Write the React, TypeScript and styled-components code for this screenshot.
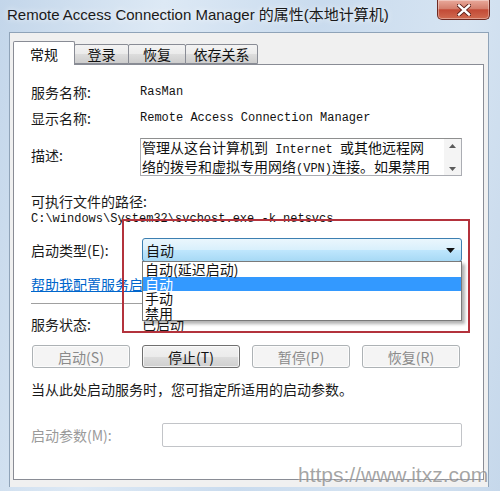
import React from 'react';
import styled, { createGlobalStyle } from 'styled-components';

const GlobalStyle = createGlobalStyle`
  html, body {
    margin: 0;
    padding: 0;
    background: #fff;
  }
  body {
    font-family: "Noto Sans CJK SC", "Liberation Sans", sans-serif;
  }
`;

const Window = styled.div`
  position: relative;
  width: 500px;
  height: 491px;
  overflow: hidden;
  background: linear-gradient(100deg, #c3d6ea 0%, #dde9f5 28%, #c9dbee 55%, #d6e4f2 80%, #c6d8eb 100%);
`;

const TitleBar = styled.div`
  height: 32px;
  display: flex;
  justify-content: space-between;
  align-items: flex-start;
  padding-left: 7px;
  box-sizing: border-box;
`;

const Title = styled.div`
  margin-top: 6px;
  font-family: "Liberation Sans", "Noto Sans CJK SC", sans-serif;
  font-size: 15px;
  line-height: 18px;
  color: #1a1a1a;
  text-shadow: 0 0 6px rgba(255, 255, 255, 0.9);
  white-space: nowrap;
`;

const CloseButton = styled.div`
  width: 53px;
  height: 20px;
  margin-right: 10px;
  box-sizing: border-box;
  border: 1px solid #6e2a22;
  border-top: none;
  border-radius: 0 0 5px 5px;
  background: linear-gradient(180deg, #e9a99b 0%, #d47f6d 45%, #c34a36 52%, #d06a50 100%);
  box-shadow: inset 0 0 0 1px rgba(255, 255, 255, 0.35);
  display: flex;
  align-items: center;
  justify-content: center;
`;

const Client = styled.div`
  margin: 0 11px 0 9px;
  height: 455px;
  box-sizing: border-box;
  background: #f0f0f0;
  border: 1px solid #8fa3b8;
  border-bottom: none;
  padding: 8px 4px 0 3px;
`;

const TabStrip = styled.div`
  display: flex;
  align-items: flex-end;
  height: 23px;
  position: relative;
  z-index: 1;
`;

const Tab = styled.div<{ $w: number; $active?: boolean }>`
  width: ${p => p.$w}px;
  height: ${p => (p.$active ? 24 : 20)}px;
  margin-bottom: ${p => (p.$active ? -1 : 0)}px;
  margin-left: -1px;
  box-sizing: border-box;
  border: 1px solid #898c95;
  border-bottom: ${p => (p.$active ? 'none' : '1px solid #898c95')};
  border-radius: 2px 2px 0 0;
  background: ${p =>
    p.$active
      ? '#ffffff'
      : 'linear-gradient(180deg, #f3f3f3 0%, #ebebeb 50%, #dddddd 51%, #cdcdcd 100%)'};
  display: flex;
  align-items: center;
  justify-content: center;
  font-size: 14px;
  line-height: 18px;
  color: #111;
  position: relative;
  z-index: ${p => (p.$active ? 2 : 1)};

  &:first-child {
    margin-left: 0;
  }
`;

const Panel = styled.div`
  height: 416px;
  box-sizing: border-box;
  border: 1px solid #898c95;
  background: #ffffff;
  padding: 17px 21px 0 17px;
  display: flex;
  flex-direction: column;
`;

const Row = styled.div<{ $mt: number; $h: number; $align?: string }>`
  margin-top: ${p => p.$mt}px;
  height: ${p => p.$h}px;
  display: flex;
  align-items: ${p => p.$align || 'center'};
  flex-shrink: 0;
`;

const Label = styled.div<{ $w?: number; $muted?: boolean; $pt?: number }>`
  width: ${p => (p.$w ? `${p.$w}px` : 'auto')};
  padding-top: ${p => p.$pt || 0}px;
  flex-shrink: 0;
  font-size: 14px;
  line-height: 20px;
  color: ${p => (p.$muted ? '#9a9a9a' : '#1a1a1a')};
  white-space: nowrap;
`;

const MonoText = styled.div`
  font-family: "Liberation Mono", "Noto Sans CJK SC", monospace;
  font-size: 12px;
  line-height: 16px;
  color: #111;
  white-space: nowrap;
`;

const DescBox = styled.div`
  width: 322px;
  height: 38px;
  box-sizing: border-box;
  border: 1px solid #abadb3;
  border-top-color: #8e8f8f;
  display: flex;
  background: #fff;
`;

const DescText = styled.div`
  flex: 1;
  padding: 0 0 0 1px;
  font-family: "Noto Sans CJK SC", sans-serif;
  font-size: 14px;
  line-height: 16px;
  color: #111;
  white-space: pre;
`;

const Latin = styled.span`
  font-family: "Liberation Mono", monospace;
  font-size: 12px;
`;

const ScrollBar = styled.div`
  width: 17px;
  background: #f4f4f4;
  display: flex;
  flex-direction: column;
  justify-content: space-between;
  align-items: center;
  padding: 5px 0 4px;
  box-sizing: border-box;
`;

const Combo = styled.div`
  position: relative;
  width: 320px;
  height: 24px;
  box-sizing: border-box;
  border: 1px solid #3c7fb1;
  border-radius: 3px;
  background: linear-gradient(180deg, #eaf6fd 0%, #d9f0fc 48%, #bee6fd 52%, #a7d9f5 100%);
  display: flex;
  align-items: center;
  justify-content: space-between;
  padding: 0 6px 0 3px;
  font-size: 14px;
  color: #111;
`;

const DropList = styled.div`
  position: absolute;
  top: 100%;
  left: -1px;
  width: 320px;
  height: 60px;
  box-sizing: border-box;
  border: 1px solid #7a7a7a;
  background: #fff;
  box-shadow: 3px 3px 3px rgba(0, 0, 0, 0.3);
  z-index: 5;
`;

const DropItem = styled.div<{ $selected?: boolean }>`
  height: 14.5px;
  line-height: 14.5px;
  padding-left: 2px;
  font-size: 14px;
  color: ${p => (p.$selected ? '#ffffff' : '#111')};
  background: ${p => (p.$selected ? '#3399ff' : 'transparent')};
  white-space: nowrap;
`;

const Highlight = styled.div`
  position: absolute;
  left: -21px;
  top: -20px;
  width: 348px;
  height: 114px;
  box-sizing: border-box;
  border: 2px solid #b3323c;
  z-index: 6;
  pointer-events: none;
`;

const Link = styled.div`
  font-size: 14px;
  line-height: 18px;
  color: #0066cc;
  text-decoration: underline;
  white-space: nowrap;
`;

const Separator = styled.div`
  margin-top: 10px;
  height: 1px;
  background: #a0a0a0;
  flex-shrink: 0;
`;

const ButtonRow = styled.div`
  margin-top: 11px;
  margin-left: 1px;
  display: flex;
  gap: 12px;
  flex-shrink: 0;
`;

const Button = styled.div<{ $disabled?: boolean }>`
  width: 98px;
  height: 23px;
  box-sizing: border-box;
  border: 1px solid ${p => (p.$disabled ? '#adb2b5' : '#707070')};
  border-radius: 3px;
  background: ${p =>
    p.$disabled
      ? '#f4f4f4'
      : 'linear-gradient(180deg, #f2f2f2 0%, #ebebeb 50%, #dddddd 51%, #cfcfcf 100%)'};
  box-shadow: inset 0 0 0 1px rgba(255, 255, 255, 0.7);
  display: flex;
  align-items: center;
  justify-content: center;
  font-size: 14px;
  color: ${p => (p.$disabled ? '#8a8a8a' : '#111')};
`;

const Input = styled.div`
  width: 300px;
  height: 24px;
  box-sizing: border-box;
  border: 1px solid #c2c4c8;
  border-radius: 2px;
  background: #fff;
`;

const Watermark = styled.div`
  position: absolute;
  left: 298px;
  top: 463px;
  font-family: "Liberation Sans", Arial, sans-serif;
  font-size: 21px;
  line-height: 24px;
  color: rgba(105, 105, 105, 0.6);
  text-shadow: 0 0 2px rgba(255, 255, 255, 0.8);
  white-space: nowrap;
  pointer-events: none;
`;

const CloseIcon = () => (
  <svg width="14" height="12" viewBox="0 0 14 12">
    <path d="M2 1.5 L12 10.5 M12 1.5 L2 10.5" stroke="#5a1e18" strokeWidth="4.2" strokeLinecap="square" />
    <path d="M2 1.5 L12 10.5 M12 1.5 L2 10.5" stroke="#ffffff" strokeWidth="2.4" strokeLinecap="square" />
  </svg>
);

const Arrow = ({ up, size = 7, color = '#5a5a5a' }: { up?: boolean; size?: number; color?: string }) => (
  <svg width={size} height={Math.round(size * 0.57)} viewBox="0 0 7 4">
    <path d={up ? 'M0 4 L3.5 0 L7 4 Z' : 'M0 0 L7 0 L3.5 4 Z'} fill={color} />
  </svg>
);

const tabs = [
  { name: '常规', w: 62 },
  { name: '登录', w: 55 },
  { name: '恢复', w: 58 },
  { name: '依存关系', w: 73 },
];

const options = ['自动(延迟启动)', '自动', '手动', '禁用'];

const App: React.FC = () => {
  return (
    <Window>
      <GlobalStyle />
      <TitleBar>
        <Title>Remote Access Connection Manager 的属性(本地计算机)</Title>
        <CloseButton>
          <CloseIcon />
        </CloseButton>
      </TitleBar>

      <Client>
        <TabStrip>
          {tabs.map((t, i) => (
            <Tab key={t.name} $w={t.w} $active={i === 0}>
              {t.name}
            </Tab>
          ))}
        </TabStrip>

        <Panel>
          <Row $mt={0} $h={20}>
            <Label $w={109}>服务名称:</Label>
            <MonoText>RasMan</MonoText>
          </Row>
          <Row $mt={6} $h={20}>
            <Label $w={109}>显示名称:</Label>
            <MonoText>Remote Access Connection Manager</MonoText>
          </Row>
          <Row $mt={10} $h={38} $align="flex-start">
            <Label $w={109} $pt={7}>描述:</Label>
            <DescBox>
              <DescText>
                管理从这台计算机到<Latin> Internet </Latin>或其他远程网{'\n'}
                络的拨号和虚拟专用网络<Latin>(VPN)</Latin>连接。如果禁用
              </DescText>
              <ScrollBar>
                <Arrow up />
                <Arrow />
              </ScrollBar>
            </DescBox>
          </Row>
          <Row $mt={16} $h={18}>
            <Label>可执行文件的路径:</Label>
          </Row>
          <Row $mt={1} $h={16}>
            <MonoText>C:\windows\System32\svchost.exe -k netsvcs</MonoText>
          </Row>
          <Row $mt={11} $h={24}>
            <Label $w={111}>启动类型(E):</Label>
            <Combo>
              <span>自动</span>
              <Arrow size={9} color="#111" />
              <DropList>
                {options.map((o, i) => (
                  <DropItem key={o} $selected={i === 1}>
                    {o}
                  </DropItem>
                ))}
              </DropList>
              <Highlight />
            </Combo>
          </Row>
          <Row $mt={13} $h={18}>
            <Link>帮助我配置服务启动选项。</Link>
          </Row>
          <Separator />
          <Row $mt={10} $h={20}>
            <Label $w={111}>服务状态:</Label>
            <Label>已启动</Label>
          </Row>
          <ButtonRow>
            <Button $disabled>启动(S)</Button>
            <Button>停止(T)</Button>
            <Button $disabled>暂停(P)</Button>
            <Button $disabled>恢复(R)</Button>
          </ButtonRow>
          <Row $mt={11} $h={20}>
            <Label>当从此处启动服务时，您可指定所适用的启动参数。</Label>
          </Row>
          <Row $mt={24} $h={24}>
            <Label $w={131} $muted>启动参数(M):</Label>
            <Input />
          </Row>
        </Panel>
      </Client>

      <Watermark>https://www.itxz.com</Watermark>
    </Window>
  );
};

export default App;
